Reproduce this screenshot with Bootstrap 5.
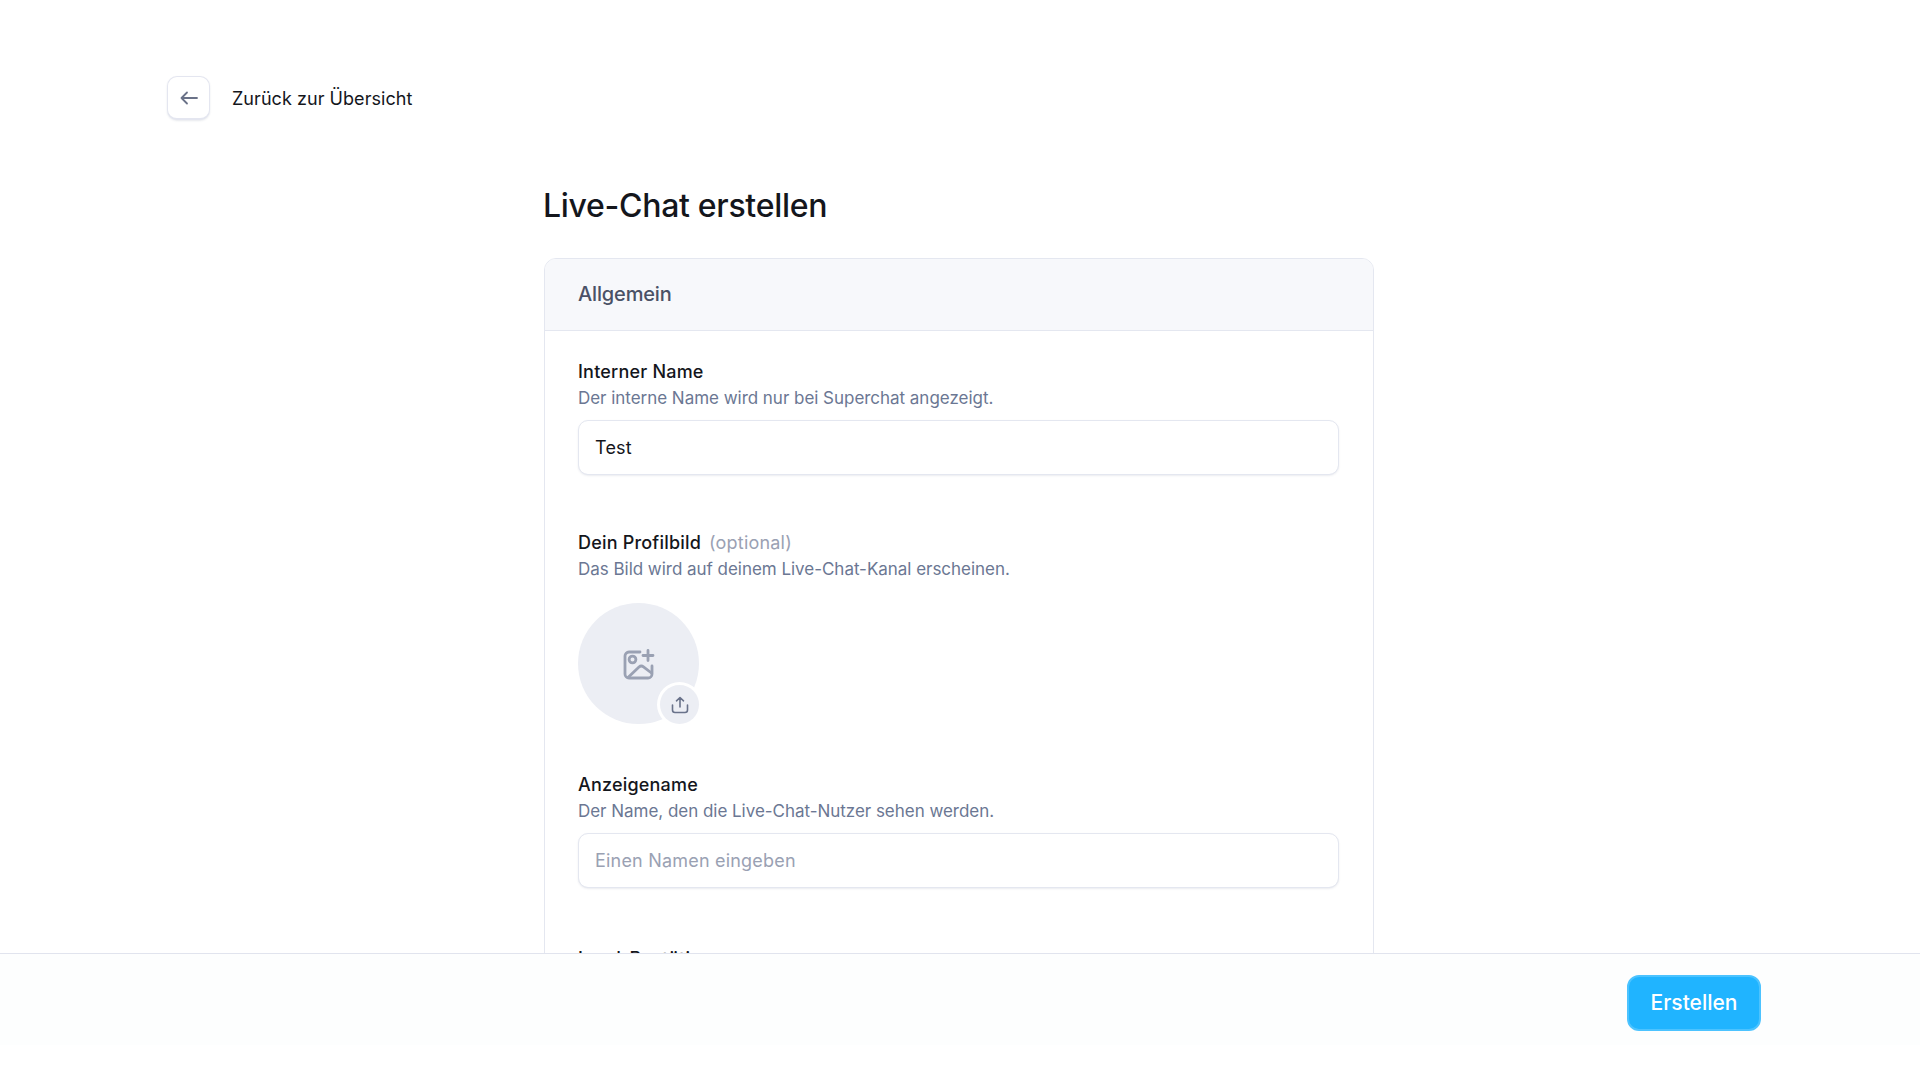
<!DOCTYPE html>
<html lang="de">
<head>
<meta charset="utf-8">
<title>Live-Chat erstellen</title>
<link href="https://cdn.jsdelivr.net/npm/bootstrap@5.3.0/dist/css/bootstrap.min.css" rel="stylesheet">
<style>
html,body{height:100%;}
body{font-family:Inter,"Noto Sans",sans-serif;background:#fff;color:#14161c;overflow:hidden;}
.scroll-zone{height:953px;overflow:hidden;}
.back-row{padding:76px 0 0 167px;gap:22px;}
.back-btn{width:43px;height:44px;border:1.5px solid #e4e6f0;border-bottom-width:2.5px;border-radius:10px;background:#fff;box-shadow:0 1px 2px rgba(60,70,110,.12);padding:0;}
.back-label{font-size:18px;letter-spacing:.05px;}
.form-wrap{width:830px;margin:0 0 0 544px;}
.page-title{font-size:32px;font-weight:500;letter-spacing:-.3px;line-height:40px;margin:66px 0 32px -1px;color:#14161c;}
.panel{border:1.5px solid #e4e7f0;border-radius:12px;overflow:hidden;background:#fff;}
.panel-head{height:72px;background:#f7f8fb;border-bottom:1.5px solid #e4e7f0;padding:0 33px 2px;font-size:20px;font-weight:500;color:#4a5166;letter-spacing:-.15px;}
.panel-body{padding:28px 34px 0 33px;}
.field-label{font-size:18px;font-weight:500;line-height:26px;letter-spacing:.2px;margin:0;color:#14161c;}
.opt-note{font-weight:400;color:#9aa1b3;margin-left:3px;}
.field-hint{font-size:17px;line-height:26px;color:#6b7793;letter-spacing:-.03px;margin:0 0 9px;}
.field-input{height:55px;border:1.5px solid #e4e7f0;border-radius:10px;padding:0 16px;font-size:18px;letter-spacing:.2px;color:#14161c;box-shadow:0 1px 2px rgba(60,70,110,.1);}
.field-input::placeholder{color:#9aa1b3;opacity:1;}
.field-block{margin-bottom:55px;}
.avatar-area{width:121px;height:121px;border-radius:50%;background:#eceef4;position:relative;margin-top:21px;}
.avatar-badge{position:absolute;right:0;bottom:0;width:39px;height:39px;border-radius:50%;background:#eceef4;box-shadow:0 0 0 3px #fff;}
.footer-bar{height:92px;border-top:1.5px solid #e1e4ee;background:#fdfefe;padding:21px 159px 0 0;}
.go-btn{width:134px;height:56px;background:#20b4ff;border:2px solid #4cc3ff;border-radius:12px;color:#fff;font-size:21px;font-weight:500;letter-spacing:0;padding:0;}
.go-btn:hover{background:#20b4ff;color:#fff;border-color:#4cc3ff;}
.gap-after-avatar{margin-bottom:48px;}
.gap-after-name{margin-bottom:58px;}
</style>
</head>
<body>
<div class="scroll-zone">
  <div class="d-flex align-items-center back-row">
    <button type="button" class="btn back-btn d-flex align-items-center justify-content-center" aria-label="Zurück">
      <svg width="20" height="20" viewBox="0 0 20 20" fill="none" stroke="#6a7288" stroke-width="1.800" stroke-linecap="round" stroke-linejoin="round"><path d="M18 10H2.500M8 4.500 2.500 10 8 15.500"/></svg>
    </button>
    <span class="back-label">Zurück zur Übersicht</span>
  </div>
  <div class="form-wrap">
    <h1 class="page-title">Live-Chat erstellen</h1>
    <div class="panel">
      <div class="panel-head d-flex align-items-center">Allgemein</div>
      <div class="panel-body">
        <div class="field-block">
          <p class="field-label">Interner Name</p>
          <p class="field-hint">Der interne Name wird nur bei Superchat angezeigt.</p>
          <input class="form-control field-input" value="Test">
        </div>
        <div class="field-block gap-after-avatar">
          <p class="field-label">Dein Profilbild <span class="opt-note">(optional)</span></p>
          <p class="field-hint mb-0">Das Bild wird auf deinem Live-Chat-Kanal erscheinen.</p>
          <div class="avatar-area d-flex align-items-center justify-content-center">
            <svg width="32" height="32" viewBox="0 0 32 32" fill="none" stroke="#9aa1b3" stroke-width="2.800" stroke-linecap="round" stroke-linejoin="round"><path d="M17 4H6a4 4 0 0 0-4 4v18a4 4 0 0 0 4 4h19a4 4 0 0 0 4-4v-8"/><path d="M25 2.500v10M20 7.500h10"/><circle cx="9.500" cy="11.500" r="3.400"/><path d="M5 29.500 16 19a3.500 3.500 0 0 1 4.500-.2L28.500 25"/></svg>
            <div class="avatar-badge d-flex align-items-center justify-content-center">
              <svg width="18" height="18" viewBox="0 0 18 18" fill="none" stroke="#69728a" stroke-width="1.600" stroke-linecap="round" stroke-linejoin="round"><path d="M9 11V1.500M5.500 4.800 9 1.500l3.500 3.300"/><path d="M1.500 9v5a2.500 2.500 0 0 0 2.500 2.500h10a2.500 2.500 0 0 0 2.500-2.500V9"/></svg>
            </div>
          </div>
        </div>
        <div class="field-block gap-after-name">
          <p class="field-label">Anzeigename</p>
          <p class="field-hint">Der Name, den die Live-Chat-Nutzer sehen werden.</p>
          <input class="form-control field-input" placeholder="Einen Namen eingeben">
        </div>
        <div class="field-block">
          <p class="field-label">Lead-Bestätigung</p>
        </div>
      </div>
    </div>
  </div>
</div>
<div class="footer-bar d-flex justify-content-end align-items-start">
  <button type="button" class="btn go-btn">Erstellen</button>
</div>
<script src="https://cdn.jsdelivr.net/npm/bootstrap@5.3.0/dist/js/bootstrap.bundle.min.js"></script>
</body>
</html>
